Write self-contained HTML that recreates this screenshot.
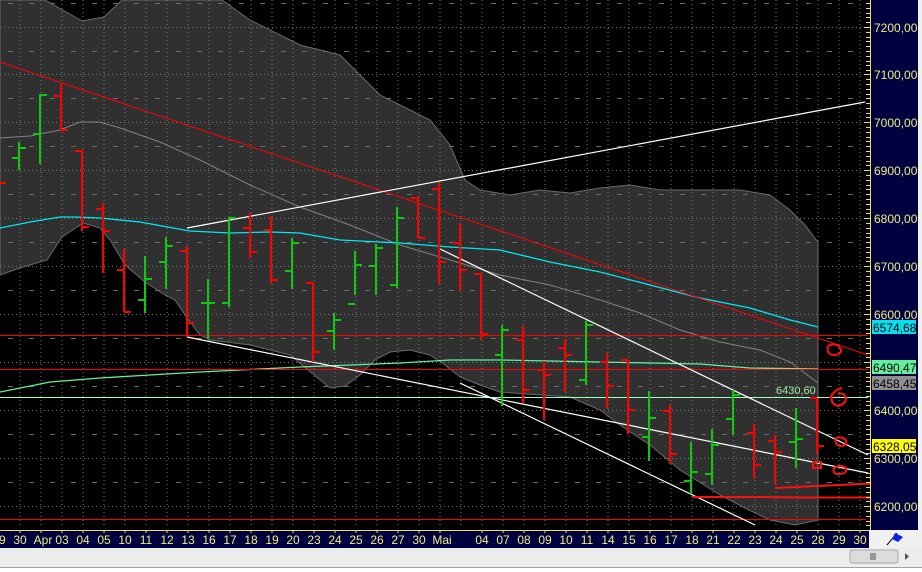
<!DOCTYPE html>
<html><head><meta charset="utf-8"><style>
html,body{margin:0;padding:0;background:#fff;width:922px;height:572px;overflow:hidden}
svg{display:block}
text{font-family:"Liberation Sans",sans-serif}
</style></head><body>
<svg width="922" height="572" viewBox="0 0 922 572" xmlns="http://www.w3.org/2000/svg">
<rect x="0" y="0" width="922" height="572" fill="#f0f0f0"/>
<rect x="0" y="0" width="870" height="530" fill="#000"/>
<!-- band -->
<path d="M0,0 H45 L82,21 L104,17 L122,0 H222 L250,20 L300,45 L340,55 L360,75 L380,95 L410,110 L430,120 L450,145 L465,180 L480,190 L510,195 L540,190 L570,193 L600,188 L630,185 L660,190 L700,190 L740,190 L770,195 L790,210 L805,225 L818,242 V520 L795,525 L770,520 L745,508 L720,495 L680,470 L650,445 L620,425 L600,410 L570,397 L500,392 L480,385 L460,377 L445,365 L430,355 L410,350 L390,352 L375,360 L360,375 L345,386 L330,388 L290,355 L250,345 L210,340 L200,335 L187,318 L175,300 L165,295 L145,282 L125,265 L110,240 L100,228 L83,223 L62,237 L47,260 L20,268 L0,275 Z" fill="#303030" stroke="#6a6a6a" stroke-width="1"/>
<!-- grid -->
<g stroke="#7a7a7a" stroke-width="1" stroke-dasharray="1 3">
<path d="M20,0V528M41,0V528M62,0V528M83,0V528M104,0V528M125,0V528M146,0V528M167,0V528M188,0V528M209,0V528M230,0V528M251,0V528M272,0V528M293,0V528M314,0V528M335,0V528M356,0V528M377,0V528M398,0V528M419,0V528M440,0V528M461,0V528M482,0V528M503,0V528M524,0V528M545,0V528M566,0V528M587,0V528M608,0V528M629,0V528M650,0V528M671,0V528M692,0V528M713,0V528M734,0V528M755,0V528M776,0V528M797,0V528M818,0V528M839,0V528M860,0V528"/>
<path d="M0,27.5H868M0,74.5H868M0,122.5H868M0,170.5H868M0,218.5H868M0,266.5H868M0,314.5H868M0,362.5H868M0,410.5H868M0,458.5H868M0,506.5H868"/>
</g>
<g stroke="#6a6a6a" stroke-width="1" stroke-dasharray="5 16" stroke-dashoffset="-8">
<path d="M0,3.5H868M0,51.5H868M0,98.5H868M0,146.5H868M0,194.5H868M0,242.5H868M0,290.5H868M0,338.5H868M0,386.5H868M0,434.5H868M0,482.5H868"/>
</g>
<!-- MAs -->
<polyline fill="none" stroke="#808080" stroke-width="1" points="0,138 30,136 60,130 80,122 100,122 120,128 160,142 200,160 250,185 300,207 350,225 400,245 450,260 500,275 550,285 600,300 640,313 680,330 720,342 760,350 790,362 818,383"/>
<polyline fill="none" stroke="#00e8f0" stroke-width="1.3" points="0,228 30,222 60,217 75,217 100,218 140,222 190,231 230,233 270,232 300,233 340,240 400,243 450,247 500,250 550,262 600,272 650,285 700,298 750,308 790,320 818,327"/>
<polyline fill="none" stroke="#60f0a0" stroke-width="1.3" points="0,392 50,382 100,378 150,375 200,372 300,367 400,363 450,360 500,360 550,361 600,362 650,363 700,364 750,368 818,369"/>
<!-- horizontal lines -->
<path d="M0,335.5H868M0,369.5H868M0,519.5H866" stroke="#ff0000" stroke-width="1"/>
<path d="M0,397.5H868" stroke="#a0ffb0" stroke-width="1"/>
<!-- trend lines -->
<path d="M0,62 L868,355" stroke="#ff0000" stroke-width="1"/>
<g stroke="#fff" stroke-width="1.2" fill="none">
<path d="M187,228 L865,102"/>
<path d="M440,249 L868,455"/>
<path d="M187,337 L868,473"/>
<path d="M460,383 L755,525"/>
</g>
<!-- bars -->
<g stroke-width="2" fill="none">
<path stroke="#ff0000" d="M0,183H6"/>
<path stroke="#10c810" d="M19,142V170M12,158H19M19,148H26 M40,94V164M33,134H40M40,95H47 M145,256V313M138,300H145M145,279H152 M166,237V289M159,262H166M166,246H173 M208,279V339M201,303H208M208,303H215 M229,217V307M222,303H229M229,218H236 M292,238V289M285,271H292M292,243H299 M334,313V350M327,331H334M334,320H341 M355,251V295M348,304H355M355,265H362 M376,244V295M369,266H376M376,248H383 M397,207V288M390,285H397M397,218H404 M502,325V406M495,355H502M502,330H509 M586,321V385M579,380H586M586,325H593 M649,391V461M642,437H649M649,418H656 M691,442V494M684,481H691M691,472H698 M712,429V485M705,474H712M712,445H719 M733,390V435M726,419H733M733,395H740 M796,408V468M789,442H796M796,439H803"/>
<path stroke="#ff0000" d="M61,84V131M54,96H61M61,130H68 M82,150V231M75,151H82M82,227H89 M103,203V273M96,209H103M103,231H110 M124,249V312M117,270H124M124,312H131 M187,246V337M180,251H187M187,323H194 M250,213V258M243,228H250M250,252H257 M271,216V283M264,230H271M271,280H278 M313,282V362M306,283H313M313,352H320 M418,197V238M411,198H418M418,238H425 M439,182V284M432,189H439M439,262H446 M460,223V291M453,243H460M460,270H467 M481,274V340M474,274H481M481,334H488 M523,326V403M516,340H523M523,390H530 M544,361V420M537,370H544M544,375H551 M565,339V392M558,348H565M565,355H572 M607,353V408M600,362H607M607,386H614 M628,360V434M621,360H628M628,410H635 M670,405V464M663,411H670M670,454H677 M754,424V479M747,433H754M754,465H761 M775,435V485M768,441H775M775,452H782 M817,398V454M810,398H817M817,446H824"/>
</g>
<text x="776" y="394" font-size="11" fill="#a0e8a0">6430,60</text>
<!-- hand drawn -->
<g stroke="#ff1010" stroke-width="2" fill="none">
<path d="M692,497 H760 Q800,498 922,497"/>
<path d="M775,488 Q820,486 860,484 Q890,482 922,485"/>
<path d="M828,346 q8,-4 12,2 q4,6 -6,7 q-8,0 -6,-9"/>
<path d="M830,398 q4,-8 12,-10 M832,396 q-2,8 6,10 q8,-2 8,-8 q-2,-6 -8,-4"/>
<path d="M836,438 q6,-2 10,2 q2,6 -6,6 q-6,-2 -4,-8"/>
<path d="M834,468 q6,-4 12,0 q2,6 -8,6 q-6,0 -4,-6"/>
<path d="M813,462 h8 v6 h-8 z"/>
</g>
<!-- right axis -->
<rect x="871" y="0" width="47" height="530" fill="#000040"/>
<rect x="918" y="0" width="4" height="548" fill="#f0f0f0"/>
<path d="M870.5,0V530" stroke="#f0e060" stroke-width="1"/>
<g stroke="#f0e060" stroke-width="1" id="ticks">
<path d="M866,3.5h4M866,8.5h4M866,13.5h4M866,17.5h4M866,22.5h4M864,27.5h6M866,32.5h4M866,37.5h4M866,41.5h4M866,46.5h4M866,51.5h4M866,56.5h4M866,61.5h4M866,65.5h4M866,70.5h4M864,74.5h6M866,79.5h4M866,84.5h4M866,89.5h4M866,94.5h4M866,98.5h4M866,103.5h4M866,108.5h4M866,113.5h4M866,117.5h4M864,122.5h6M866,127.5h4M866,132.5h4M866,137.5h4M866,141.5h4M866,146.5h4M866,151.5h4M866,156.5h4M866,161.5h4M866,165.5h4M864,170.5h6M866,175.5h4M866,180.5h4M866,185.5h4M866,189.5h4M866,194.5h4M866,199.5h4M866,204.5h4M866,209.5h4M866,213.5h4M864,218.5h6M866,223.5h4M866,228.5h4M866,233.5h4M866,237.5h4M866,242.5h4M866,247.5h4M866,252.5h4M866,257.5h4M866,261.5h4M864,266.5h6M866,271.5h4M866,276.5h4M866,281.5h4M866,285.5h4M866,290.5h4M866,295.5h4M866,300.5h4M866,305.5h4M866,309.5h4M864,314.5h6M866,319.5h4M866,324.5h4M866,329.5h4M866,333.5h4M866,338.5h4M866,343.5h4M866,348.5h4M866,353.5h4M866,357.5h4M864,362.5h6M866,367.5h4M866,372.5h4M866,377.5h4M866,381.5h4M866,386.5h4M866,391.5h4M866,396.5h4M866,401.5h4M866,405.5h4M864,410.5h6M866,415.5h4M866,420.5h4M866,425.5h4M866,429.5h4M866,434.5h4M866,439.5h4M866,444.5h4M866,449.5h4M866,453.5h4M864,458.5h6M866,463.5h4M866,468.5h4M866,473.5h4M866,477.5h4M866,482.5h4M866,487.5h4M866,492.5h4M866,497.5h4M866,501.5h4M864,506.5h6M866,511.5h4M866,516.5h4M866,521.5h4M866,525.5h4"/>
</g>
<g font-size="12" fill="#f0f080">
<text x="874" y="32">7200,00</text>
<text x="874" y="79">7100,00</text>
<text x="874" y="127">7000,00</text>
<text x="874" y="175">6900,00</text>
<text x="874" y="223">6800,00</text>
<text x="874" y="271">6700,00</text>
<text x="874" y="319">6600,00</text>
<text x="874" y="415">6400,00</text>
<text x="874" y="463">6300,00</text>
<text x="874" y="511">6200,00</text>
</g>
<rect x="872" y="320" width="44" height="14" fill="#00e0f0"/>
<rect x="872" y="360" width="44" height="14" fill="#60f0a0"/>
<rect x="872" y="376" width="44" height="14" fill="#909090"/>
<rect x="872" y="439" width="44" height="14" fill="#ffff00"/>
<g font-size="12" fill="#000">
<text x="873" y="332">6574,68</text>
<text x="873" y="372">6490,47</text>
<text x="873" y="388">6458,45</text>
<text x="873" y="451">6328,05</text>
</g>
<!-- bottom axis -->
<rect x="0" y="530" width="869" height="18" fill="#000040"/>
<path d="M0,530.5H869" stroke="#f0e060"/>
<g stroke="#f0e060"><path d="M20,530V533M41,530V533M62,530V533M83,530V533M104,530V533M125,530V533M146,530V533M167,530V533M188,530V533M209,530V533M230,530V533M251,530V533M272,530V533M293,530V533M314,530V533M335,530V533M356,530V533M377,530V533M398,530V533M419,530V533M440,530V533M482,530V533M503,530V533M524,530V533M545,530V533M566,530V533M587,530V533M608,530V533M629,530V533M650,530V533M671,530V533M692,530V533M713,530V533M734,530V533M755,530V533M776,530V533M797,530V533M818,530V533M839,530V533M860,530V533"/></g>
<g font-size="12" fill="#f0f080" text-anchor="middle">
<text x="-1" y="544">29</text><text x="20" y="544">30</text><text x="43" y="544">Apr</text><text x="62" y="544">03</text><text x="83" y="544">04</text><text x="104" y="544">05</text><text x="125" y="544">10</text><text x="146" y="544">11</text><text x="167" y="544">12</text><text x="188" y="544">13</text><text x="209" y="544">16</text><text x="230" y="544">17</text><text x="251" y="544">18</text><text x="272" y="544">19</text><text x="293" y="544">20</text><text x="314" y="544">23</text><text x="335" y="544">24</text><text x="356" y="544">25</text><text x="377" y="544">26</text><text x="398" y="544">27</text><text x="419" y="544">30</text><text x="442" y="544">Mai</text>
<text x="482" y="544">04</text><text x="503" y="544">07</text><text x="524" y="544">08</text><text x="545" y="544">09</text><text x="566" y="544">10</text><text x="587" y="544">11</text><text x="608" y="544">14</text><text x="629" y="544">15</text><text x="650" y="544">16</text><text x="671" y="544">17</text><text x="692" y="544">18</text><text x="713" y="544">21</text><text x="734" y="544">22</text><text x="755" y="544">23</text><text x="776" y="544">24</text><text x="797" y="544">25</text><text x="818" y="544">28</text><text x="839" y="544">29</text><text x="860" y="544">30</text>
</g>
<!-- corner flag -->
<path d="M887,545 L897,533" stroke="#000" stroke-width="1"/>
<path d="M895,533 L903,537 L898,542 L892,539 Z" fill="#1020e0"/>
<!-- scrollbar -->
<rect x="0" y="548" width="922" height="17" fill="#ececec"/>
<rect x="850" y="550" width="48" height="13" rx="2" fill="#dcdcdc" stroke="#a8a8a8"/>
<path d="M871,553V560M873,553V560M875,553V560" stroke="#555"/>
<path d="M905,553 L909,556.5 L905,560 Z" fill="#555"/>
<rect x="0" y="567" width="922" height="1" fill="#a0a0a0"/>
<rect x="0" y="568" width="922" height="4" fill="#fff"/>
</svg>
</body></html>
